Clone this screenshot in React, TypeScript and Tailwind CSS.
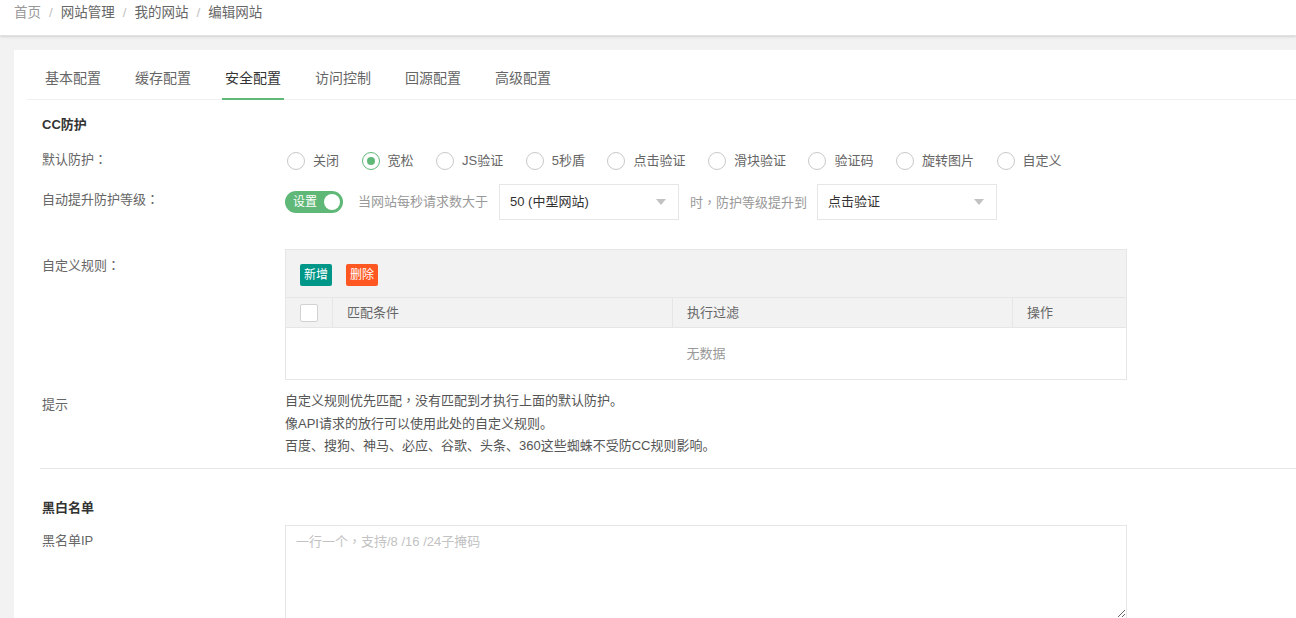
import React from 'react'

const tabs = ['基本配置', '缓存配置', '安全配置', '访问控制', '回源配置', '高级配置']
const modes = ['关闭', '宽松', 'JS验证', '5秒盾', '点击验证', '滑块验证', '验证码', '旋转图片', '自定义']

// centred full-width punctuation (like YaHei), TC face puts it in the middle of the cell
function P({ c }: { c: string }) {
  return <span className="font-['Noto_Sans_CJK_TC']">{c}</span>
}

function Select({ value }: { value: string }) {
  return (
    <div className="flex h-[36px] w-[180px] shrink-0 items-center justify-between border border-[#e6e6e6] bg-white pl-[10px] pr-[12px]">
      <span className="text-[13px] text-[#333]">{value}</span>
      <span className="h-0 w-0 border-x-[5px] border-t-[6px] border-x-transparent border-t-[#c2c2c2]" />
    </div>
  )
}

function Radio({ label, checked }: { label: string; checked?: boolean }) {
  return (
    <div className="mr-[22.5px] flex items-center">
      {checked ? (
        <span className="flex h-[18px] w-[18px] items-center justify-center rounded-full border border-[#5FB878]">
          <span className="h-[8px] w-[8px] rounded-full bg-[#5FB878]" />
        </span>
      ) : (
        <span className="h-[18px] w-[18px] rounded-full border border-[#c9c9c9]" />
      )}
      <span className="ml-[8px] text-[13px] text-[#666]">{label}</span>
    </div>
  )
}

export default function App() {
  return (
    <div
      className="min-h-screen overflow-hidden bg-[#f2f2f2]"
      style={{ fontFamily: '"Liberation Sans", "Noto Sans CJK SC", sans-serif' }}
    >
      {/* breadcrumb */}
      <div className="h-[36px] border-b border-[#e2e2e2] bg-white pl-[14px] pt-[4px] shadow-sm">
        <div className="flex text-[13.5px] leading-[18px]">
          <span className="text-[#999]">首页</span>
          <span className="mx-[8px] text-[#c2c2c2]">/</span>
          <span className="text-[#666]">网站管理</span>
          <span className="mx-[8px] text-[#c2c2c2]">/</span>
          <span className="text-[#666]">我的网站</span>
          <span className="mx-[8px] text-[#c2c2c2]">/</span>
          <span className="text-[#666]">编辑网站</span>
        </div>
      </div>

      <div className="ml-[14px] mt-[14px] bg-white pb-[20px] pt-[10px]">
        {/* tabs */}
        <div className="ml-[13px] flex h-[40px] gap-[28px] border-b border-[#f0f0f0] pl-[15px]">
          {tabs.map((t) => (
            <div
              key={t}
              className={
                t === '安全配置'
                  ? 'flex h-[40px] items-center border-b-2 border-[#5FB878] px-[3px] pb-[2px] text-[14px] text-[#333]'
                  : 'flex h-[40px] items-center px-[3px] pb-[4px] text-[14px] text-[#666]'
              }
            >
              {t}
            </div>
          ))}
        </div>

        <div className="ml-[26px]">
          <div className="mt-[15px] pl-[2px] text-[13px] font-bold leading-[20px] text-[#333]">CC防护</div>

          {/* default protection */}
          <div className="mt-[7px] flex h-[36px]">
            <div className="w-[245px] shrink-0 pl-[2px] pt-[7px] text-[13px] leading-[20px] text-[#666]">
              默认防护<P c="：" />
            </div>
            <div className="ml-[2px] flex items-center pt-[2px]">
              {modes.map((m) => (
                <Radio key={m} label={m} checked={m === '宽松'} />
              ))}
            </div>
          </div>

          {/* auto raise */}
          <div className="mt-[6px] flex h-[36px]">
            <div className="w-[245px] shrink-0 pl-[2px] pt-[5px] text-[13px] leading-[20px] text-[#666]">
              自动提升防护等级<P c="：" />
            </div>
            <div className="flex items-center">
              <div className="flex h-[22px] w-[58px] items-center justify-between rounded-full bg-[#5FB878] pl-[8px] pr-[3px]">
                <span className="text-[12px] leading-none text-white">设置</span>
                <span className="h-[16px] w-[16px] rounded-full bg-white" />
              </div>
              <span className="ml-[15px] mr-[11px] text-[13px] text-[#999]">当网站每秒请求数大于</span>
              <Select value="50 (中型网站)" />
              <span className="ml-[11px] mr-[10px] text-[13px] text-[#999]">
                时<P c="，" />防护等级提升到
              </span>
              <Select value="点击验证" />
            </div>
          </div>

          {/* custom rules */}
          <div className="mt-[29px] flex">
            <div className="w-[245px] shrink-0 pl-[2px] pt-[6px] text-[13px] leading-[20px] text-[#666]">
              自定义规则<P c="：" />
            </div>
            <div className="w-[842px] border border-[#e6e6e6]">
              <div className="flex h-[47px] gap-[14px] bg-[#f2f2f2] pl-[14px] pt-[14px]">
                <button className="h-[22px] rounded-[2px] bg-[#009688] px-[4px] text-[12px] text-white">新增</button>
                <button className="h-[22px] rounded-[2px] bg-[#FF5722] px-[4px] text-[12px] text-white">删除</button>
              </div>
              <div className="flex h-[30px] border-t border-[#e6e6e6] bg-[#f2f2f2] text-[13px] text-[#666]">
                <div className="flex w-[47px] items-center border-r border-[#e6e6e6] pl-[14px]">
                  <span className="h-[18px] w-[18px] rounded-[2px] border border-[#d2d2d2] bg-white" />
                </div>
                <div className="flex w-[340px] items-center border-r border-[#e6e6e6] pl-[14px]">匹配条件</div>
                <div className="flex w-[340px] items-center border-r border-[#e6e6e6] pl-[14px]">执行过滤</div>
                <div className="flex flex-1 items-center pl-[14px]">操作</div>
              </div>
              <div className="flex h-[52px] items-center justify-center border-t border-[#e6e6e6] text-[13px] text-[#999]">
                无数据
              </div>
            </div>
          </div>

          {/* hint */}
          <div className="mt-[9px] flex">
            <div className="w-[245px] shrink-0 pl-[2px] pt-[6px] text-[13px] leading-[20px] text-[#666]">提示</div>
            <div className="text-[13px] leading-[22.5px] text-[#555]">
              <p>
                自定义规则优先匹配<P c="，" />没有匹配到才执行上面的默认防护。
              </p>
              <p>像API请求的放行可以使用此处的自定义规则。</p>
              <p>百度、搜狗、神马、必应、谷歌、头条、360这些蜘蛛不受防CC规则影响。</p>
            </div>
          </div>

          <div className="mt-[10px] h-px bg-[#e6e6e6]" />

          <div className="mt-[29px] pl-[2px] text-[13px] font-bold leading-[20px] text-[#333]">黑白名单</div>

          <div className="mt-[7px] flex">
            <div className="w-[245px] shrink-0 pl-[2px] pt-[6px] text-[13px] leading-[20px] text-[#666]">黑名单IP</div>
            <textarea
              className="h-[94px] w-[842px] border border-[#e6e6e6] px-[10px] pt-[6px] font-['Liberation_Sans','Noto_Sans_CJK_TC',sans-serif] text-[13px] leading-[20px] outline-none placeholder:text-[#c2c2c2]"
              placeholder="一行一个，支持/8 /16 /24子掩码"
            />
          </div>
        </div>
      </div>
    </div>
  )
}
